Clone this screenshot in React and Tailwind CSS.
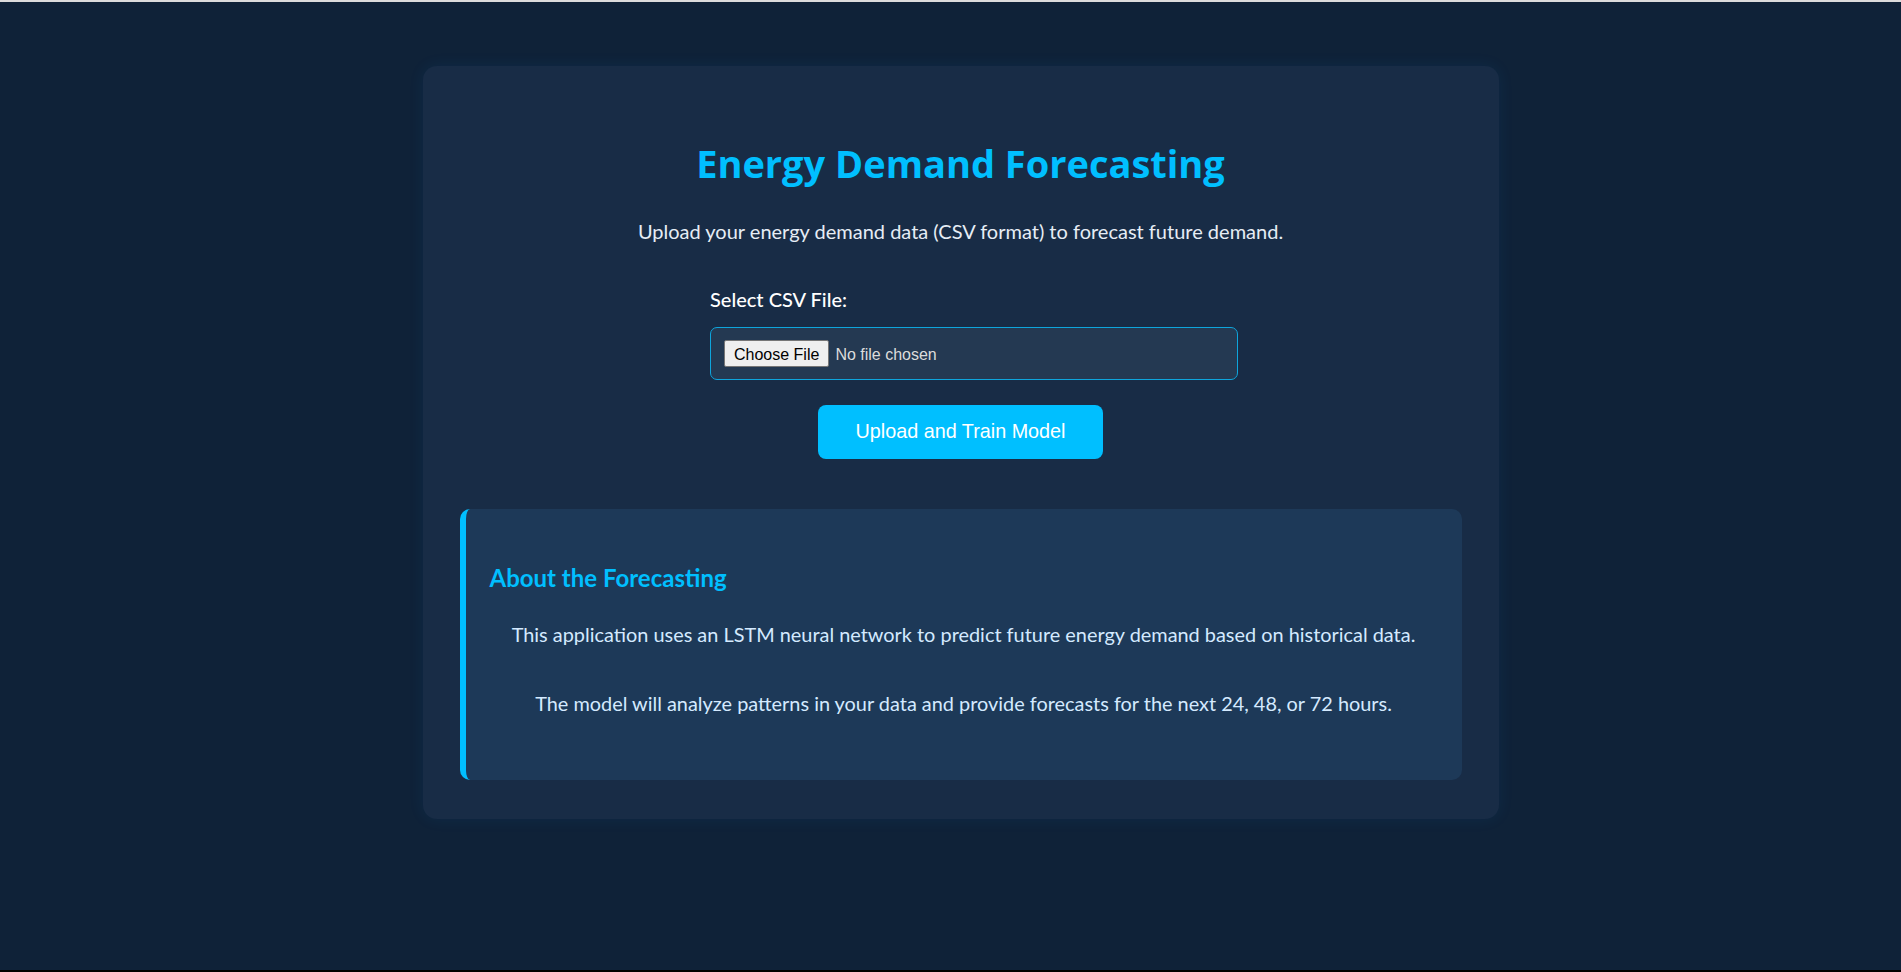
import React from "react";

const App = () => {
  return (
    <div className="min-h-screen flex flex-col bg-[#0f2238] font-['Lato',sans-serif]">
      {/* thin frame lines from the original capture */}
      <div className="h-[2px] bg-[#dcdcdc]" />
      <main className="flex-1 flex justify-center items-start pl-[20px] pt-[64px]">
        <div className="w-[1076px] rounded-[14px] bg-[#182c46] px-[37px] pt-[74px] pb-[39px] shadow-[0_0_16px_rgba(0,140,255,0.08)]">
          <h1 className="text-center text-[38px] leading-[47px] font-bold text-[#00bfff] font-['Open_Sans',sans-serif]">
            Energy Demand Forecasting
          </h1>
          <p className="mt-[30px] text-center text-[20px] leading-[29px] text-[#e6edf5]">
            Upload your energy demand data (CSV format) to forecast future demand.
          </p>

          {/* Upload form */}
          <form className="mt-[39px] flex flex-col items-center" onSubmit={(e) => e.preventDefault()}>
            <div className="w-[528px] ml-[27px]">
              <label htmlFor="csv" className="block text-[20px] leading-[29px] font-medium text-white">
                Select CSV File:
              </label>
              <input
                id="csv"
                type="file"
                accept=".csv"
                className="mt-[13px] block w-full h-[53px] px-[13px] py-[12px] leading-[27px] rounded-[7px] border border-[#0ea5dc] bg-[#243952] text-[16px] text-[#dcdcdc] font-['Liberation_Sans',Arial,sans-serif] file:mr-[6px] file:h-[27px] file:px-[9px] file:rounded-[2px] file:border file:border-[#767676] file:bg-[#efefef] file:text-black"
              />
            </div>
            <button
              type="submit"
              className="mt-[25px] h-[54px] px-[37px] rounded-[8px] bg-[#00bfff] text-white text-[19.8px] font-['Liberation_Sans',Arial,sans-serif]"
            >
              Upload and Train Model
            </button>
          </form>

          {/* Info box */}
          <section className="mt-[50px] rounded-[10px] border-l-[6px] border-[#00bfff] bg-[#1d3958] px-[24px] pt-[55px] pb-[62px]">
            <h3 className="text-[24px] leading-[28px] font-bold text-[#00bfff]">About the Forecasting</h3>
            <p className="mt-[27px] text-center text-[19.9px] leading-[30px] text-[#d4eaff]">
              This application uses an LSTM neural network to predict future energy demand based on historical data.
            </p>
            <p className="mt-[39px] text-center text-[19.9px] leading-[30px] text-[#d4eaff]">
              The model will analyze patterns in your data and provide forecasts for the next 24, 48, or 72 hours.
            </p>
          </section>
        </div>
      </main>
      <div className="h-[2px] bg-black" />
    </div>
  );
};

export default App;
